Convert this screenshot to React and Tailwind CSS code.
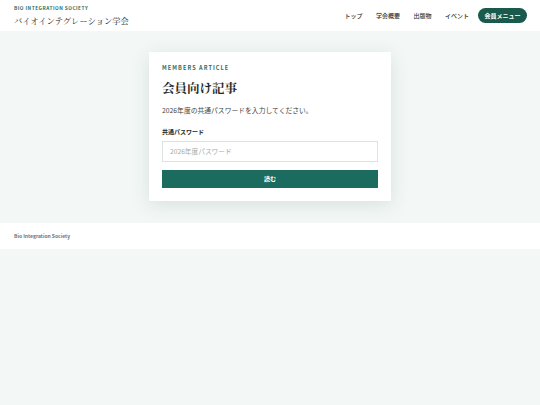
import React from 'react';

const sans = { fontFamily: '"Noto Sans CJK JP", "Noto Sans", sans-serif' };

const NavLink = ({ children }) => (
  <a href="#" className="text-[6px] font-medium text-[#2b3330] leading-none">{children}</a>
);

const App = () => (
  <div className="min-h-[405px] bg-[#f3f8f6] font-['Noto_Sans_CJK_JP','Noto_Sans',sans-serif]">
    <header className="h-[31px] bg-white flex items-center justify-between pl-[14px] pr-[13px]">
      <div className="flex flex-col">
        <span className="text-[4.8px] font-bold tracking-[0.1em] text-[#2e6f62] leading-none">BIO INTEGRATION SOCIETY</span>
        <span className="mt-[5px] text-[8.3px] text-[#1f2a27] leading-none font-['Noto_Serif_CJK_JP','Noto_Sans_CJK_JP',serif]">バイオインテグレーション学会</span>
      </div>
      <nav className="flex items-center">
        <div className="flex items-center gap-[13.5px] mr-[9px]">
          <NavLink>トップ</NavLink>
          <NavLink>学会概要</NavLink>
          <NavLink>出版物</NavLink>
          <NavLink>イベント</NavLink>
        </div>
        <a href="#" className="h-[15px] px-[6.5px] rounded-full bg-[#1a5a4c] text-white text-[6px] font-bold flex items-center leading-none">会員メニュー</a>
      </nav>
    </header>

    <main className="flex justify-center pt-[21px] pb-[22px]">
      <div className="w-[242px] bg-white shadow-[0_4px_18px_rgba(20,60,50,0.12)] px-[13px] pt-[14px] pb-[13px]">
        <p className="text-[5.5px] font-bold tracking-[0.2em] text-[#2e6f62] leading-none">MEMBERS ARTICLE</p>
        <h1 className="mt-[7px] text-[12.5px] font-bold text-[#1f2a27] leading-[18px] font-['Noto_Serif_CJK_JP','Noto_Sans_CJK_JP',serif]">会員向け記事</h1>
        <p className="mt-[8px] text-[6.8px] text-[#3c4542] leading-[10px]">2026年度の共通パスワードを入力してください。</p>
        <label className="block mt-[14px] text-[6px] font-bold text-[#1f2a27] leading-none">共通パスワード</label>
        <input
          type="password"
          placeholder="2026年度パスワード"
          className="mt-[6px] block w-full h-[21px] border border-[#dde3e0] px-[7px] text-[6.7px] text-[#333] placeholder:text-[#a6adaa] outline-none"
          style={sans}
        />
        <button className="mt-[7px] w-full h-[18px] bg-[#1b6b5f] text-white text-[6px] font-bold leading-none">読む</button>
      </div>
    </main>

    <footer className="h-[26px] bg-white flex items-center px-[14px]">
      <span className="text-[5px] font-bold text-[#6b7386] leading-none">Bio Integration Society</span>
    </footer>
  </div>
);

export default App;
